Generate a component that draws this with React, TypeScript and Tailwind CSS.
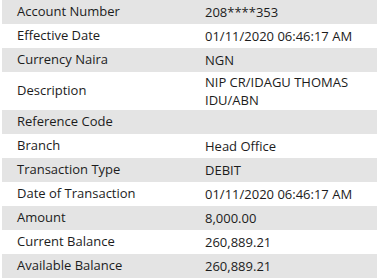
const rows: [string, React.ReactNode][] = [
  ["Account Number", "208****353"],
  ["Effective Date", "01/11/2020 06:46:17 AM"],
  ["Currency Naira", "NGN"],
  [
    "Description",
    <>
      NIP CR/IDAGU THOMAS
      <br />
      IDU/ABN
    </>,
  ],
  ["Reference Code", ""],
  ["Branch", "Head Office"],
  ["Transaction Type", "DEBIT"],
  ["Date of Transaction", "01/11/2020 06:46:17 AM"],
  ["Amount", "8,000.00"],
  ["Current Balance", "260,889.21"],
  ["Available Balance", "260,889.21"],
];

export default function App() {
  return (
    <div className="w-[386px] h-[278px] bg-white overflow-hidden pl-[2px] pr-[9px] font-['Open_Sans',sans-serif] text-[13px] text-[#1c1c1c]">
      {rows.map(([label, value], i) => (
        <div
          key={label}
          className={`flex items-center ${i === 3 ? "h-[38px]" : "h-[24px]"} ${
            i % 2 === 0 ? "bg-[#e4e4e4]" : "bg-white"
          }`}
        >
          <div className="w-[203px] pl-[15px]">{label}</div>
          <div className="flex-1 leading-[18px]">{value}</div>
        </div>
      ))}
    </div>
  );
}
